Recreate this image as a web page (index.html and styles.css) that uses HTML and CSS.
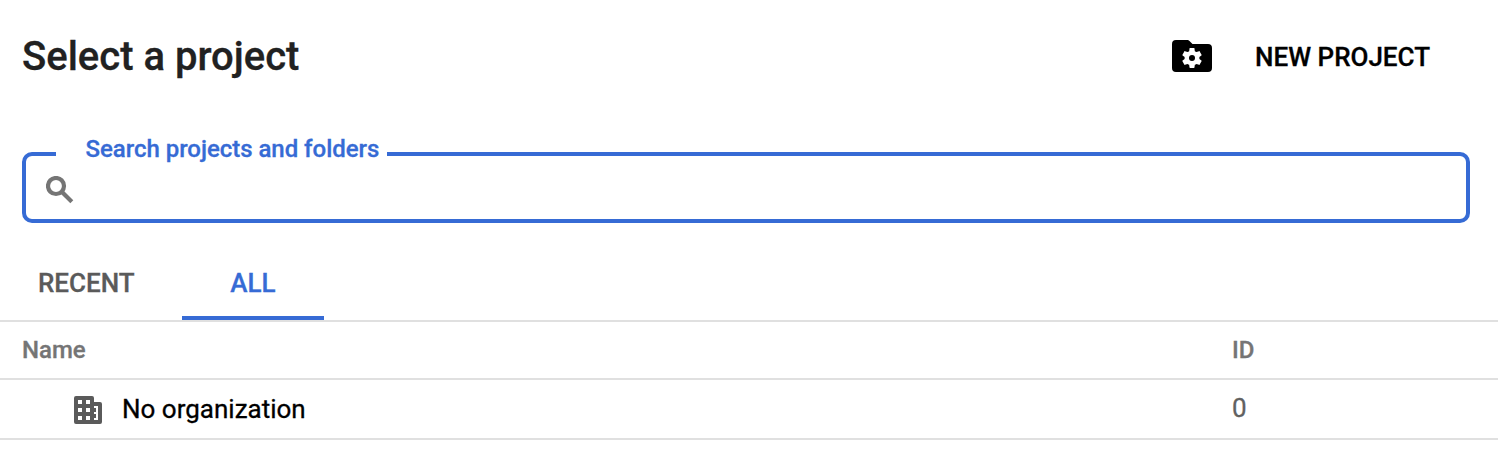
FILE: index.html
```html
<!DOCTYPE html>
<html lang="en">
<head>
<meta charset="utf-8">
<title>Select a project</title>
<link rel="stylesheet" href="styles.css">
</head>
<body>
<header class="header">
  <h1 class="title">Select a project</h1>
  <button class="new-project">
    <svg class="folder-icon" viewBox="0 0 40 32"><path d="M4 0H15.500Q16.500 0 17.500 1L20.500 4H36Q40 4 40 8V28Q40 32 36 32H4Q0 32 0 28V4Q0 0 4 0Z"/><path fill="#fff" transform="translate(20 18) scale(1.030) translate(-12 -12)" d="M19.140 12.940c.04-.3.060-.61.060-.94 0-.32-.02-.64-.07-.94l2.030-1.580c.18-.14.23-.41.120-.61l-1.920-3.320c-.12-.22-.37-.29-.59-.22l-2.390.96c-.5-.38-1.030-.7-1.620-.94l-.36-2.540c-.04-.24-.24-.41-.48-.41h-3.840c-.24 0-.43.17-.47.41l-.36 2.540c-.59.24-1.130.57-1.620.94l-2.390-.96c-.22-.08-.47 0-.59.22L2.740 8.870c-.12.21-.08.47.120.61l2.030 1.580c-.05.3-.09.63-.09.94s.02.64.07.94l-2.030 1.580c-.18.14-.23.41-.12.61l1.920 3.320c.12.22.37.29.59.22l2.390-.96c.5.38 1.030.7 1.620.94l.36 2.540c.05.24.24.41.48.41h3.840c.24 0 .44-.17.47-.41l.36-2.540c.59-.24 1.130-.56 1.620-.94l2.390.96c.22.08.47 0 .59-.22l1.920-3.320c.12-.22.070-.47-.12-.61l-2.010-1.580z"/><circle cx="20" cy="18" r="3"/></svg>
    <span class="new-label">NEW PROJECT</span>
  </button>
</header>
<fieldset class="search">
  <legend class="search-label"><span class="search-text">Search projects and folders</span></legend>
  <svg class="search-icon" viewBox="0 0 28 28"><circle cx="10" cy="10" r="8"/><path d="M15.500 15.500L25.800 25.800"/></svg>
</fieldset>
<nav class="tabs"><a class="tab recent"><span class="tab-text">RECENT</span></a><a class="tab all"><span class="tab-text">ALL</span></a></nav>
<div class="row head"><span class="name-head">Name</span><span class="id-head">ID</span></div>
<div class="row item">
  <svg class="org-icon" viewBox="0 0 28 28"><path fill-rule="evenodd" d="M2 0H18Q20 0 20 2V6H26Q28 6 28 8V26Q28 28 26 28H2Q0 28 0 26V2Q0 0 2 0ZM4 4V8H8V4ZM12 4V8H16V4ZM4 12V16H8V12ZM12 12V16H16V12ZM4 20V24H8V20ZM12 20V24H16V20ZM20 10V12H22V16H20V18H22V22H20V24H24V10Z"/></svg>
  <span class="org-name">No organization</span><span class="org-id">0</span>
</div>
</body>
</html>
```
FILE: styles.css
```css
* { box-sizing: border-box; }
body { margin: 0; background: #fff; font-family: Roboto, sans-serif; color: #000; -webkit-text-stroke: 0.3px currentColor; }
svg { display: block; flex: none; }
.header { display: flex; justify-content: space-between; align-items: center; height: 112px; padding: 0 68px 0 22px; }
.title { margin: 0; padding-top: 2px; font-size: 40px; font-weight: 500; color: #212121; line-height: 48px; }
.new-project { display: flex; align-items: center; gap: 43.500px; height: 32px; padding: 0; border: 0; background: none; font: 500 26px/32px Roboto, sans-serif; color: #000; }
.new-label { padding-top: 2px; }
.folder-icon { width: 40px; height: 32px; }
.search { height: 86px; min-width: 0; margin: 25px 28px 0 22px; padding: 0 20px; border: 4px solid #366bd5; border-radius: 10px; }
.search-label { margin-left: 10px; padding: 0 8px 0 29.500px; font-size: 24px; line-height: 24px; height: 34px; font-weight: 500; color: #366bd5; letter-spacing: -0.030px; }
.search-icon { width: 28px; height: 28px; fill: none; stroke: #757575; stroke-width: 4.200; margin-top: 5px; }
.tabs { display: flex; height: 99px; border-bottom: 2px solid #e0e0e0; font-size: 26px; font-weight: 500; line-height: 32px; }
.tab { padding-top: 44px; color: #5a5a5a; }
.recent { width: 182px; padding-left: 38px; }
.all { width: 142px; text-align: center; color: #366bd5; border-bottom: 4px solid #366bd5; }
.row { display: grid; align-items: center; border-bottom: 2px solid #e0e0e0; }
.head { grid-template-columns: 1210px 1fr; padding-left: 22px; height: 58px; font-size: 24px; font-weight: 500; color: #757575; }
.item { grid-template-columns: 48px 1110px 1fr; padding-left: 74px; height: 60px; font-size: 26px; }
.org-icon { width: 28px; height: 28px; fill: #5a5a5a; margin-top: 2px; }
.org-id { color: #616161; padding-bottom: 2px; }
```
